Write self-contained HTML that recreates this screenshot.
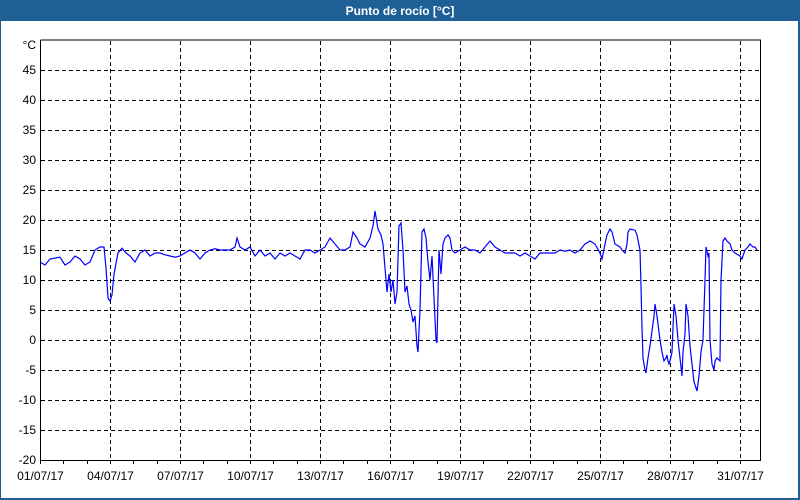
<!DOCTYPE html>
<html><head><meta charset="utf-8"><style>
html,body{margin:0;padding:0;width:800px;height:500px;overflow:hidden;background:#fff;font-family:"Liberation Sans",sans-serif}
</style></head><body>
<svg width="800" height="500" xmlns="http://www.w3.org/2000/svg" font-family="Liberation Sans, sans-serif">
<rect x="0" y="0" width="800" height="500" fill="#1e5f96"/>
<rect x="1" y="21" width="797" height="477" fill="#fff"/>
<text x="400" y="15" fill="#fff" font-size="12" font-weight="bold" text-anchor="middle">Punto de rocío [°C]</text>
<g id="grid" stroke="#000" stroke-dasharray="4,3" stroke-width="1"></g>
<g id="ticks" stroke="#000" stroke-width="1"></g>
<path d="M40.5 40 V460.5 H760.5 V40 H40.5" fill="none" stroke="#000" stroke-width="1"/>
<g id="ylab" font-size="12" text-anchor="end" fill="#000"></g>
<g id="xlab" font-size="12" text-anchor="middle" fill="#000"></g>
<text x="36" y="49" font-size="12" text-anchor="end">°C</text>
<polyline id="line" fill="none" stroke="#0000ff" stroke-width="1.2"/>
</svg>
<script>
var ns="http://www.w3.org/2000/svg";
function el(t,a,p,txt){var e=document.createElementNS(ns,t);for(var k in a)e.setAttribute(k,a[k]);if(txt)e.textContent=txt;document.getElementById(p).appendChild(e);}
for(var v=45;v>=-15;v-=5){var y=340-6*v+0.5;el('line',{x1:41,x2:760,y1:y,y2:y},'grid');}
for(var v=45;v>=-20;v-=5){el('text',{x:36,y:340-6*v+4},'ylab',String(v));}
var labs=["01/07/17","04/07/17","07/07/17","10/07/17","13/07/17","16/07/17","19/07/17","22/07/17","25/07/17","28/07/17","31/07/17"];
for(var i=0;i<11;i++){var x=40+70*i+0.5;if(i>0)el('line',{x1:x,x2:x,y1:41,y2:460},'grid');el('text',{x:x,y:480},'xlab',labs[i]);}
for(var d=0;d<31;d++){var x=Math.round(40+70*d/3)+0.5;el('line',{x1:x,x2:x,y1:460,y2:464},'ticks');}
var pts=[40,13,45,12.5,50,13.5,60,13.8,65,12.5,70,13,75,14,80,13.5,85,12.5,90,13,95,15,100,15.5,104,15.5,106,12,108,7,110,6.5,112,7.5,114,11,118,14.5,122,15.3,126,14.5,130,14,135,13,140,14.5,145,15,150,14,155,14.5,160,14.5,165,14.2,170,14,175,13.8,180,14,185,14.5,190,15,195,14.5,200,13.5,205,14.5,210,15,215,15.2,220,15,225,15,230,15,235,15.5,237,17,240,15.5,245,15,250,15.5,255,14,260,15,265,14,270,14.5,275,13.5,280,14.5,285,14,290,14.5,295,14,300,13.5,305,15,310,15,315,14.5,320,15,325,15.5,330,17,335,16,340,15,345,15,350,15.5,353,18,357,17,360,16,365,15.5,370,17,373,19,375,21.5,378,18.5,381,17.5,383,16,385,12,387,8,389,11,391,8,393,10,395,6,397,8,399,19,401,19.5,403,15,405,8,407,9,409,6,411,5,413,3,415,4,417,-1,418,-2,420,5,422,18,424,18.5,426,17,428,13,430,10,432,14,434,7,436,0,437,-0.5,439,15,441,11,443,16,445,17,448,17.5,450,17,452,15,455,14.5,460,15,465,15.5,470,15,475,15,480,14.5,485,15.5,490,16.5,495,15.5,500,15,505,14.5,510,14.5,515,14.5,520,14,525,14.5,530,14,535,13.5,540,14.5,545,14.5,550,14.5,555,14.5,560,15,565,14.8,570,15,575,14.5,580,15,585,16,590,16.5,595,16,600,14.5,602,13.5,605,16,607,17.5,610,18.5,612,18,615,16,620,15.5,622,15,625,14.5,627,16,628,18,630,18.5,635,18.3,637,17.5,640,15,641,9,642,2,643,-3,645,-5,646,-5.5,648,-3,650,-1,652,1.5,654,4,655,6,657,4,660,0,662,-2,664,-3.5,666,-3,667,-2.5,668,-3.5,669,-4,670,-3.5,672,-2,674,6,676,4,678,0,680,-3,682,-6,683,-2,685,1,686,6,688,4,690,-1,692,-4,694,-7,696,-8,697,-8.5,699,-6,701,-2,703,0,705,10,706,15.5,708,14,709,14.5,710,0,712,-4,713,-4.5,714,-5,715,-3.5,717,-3,720,-3.5,721,10,723,16.5,725,17,727,16.5,730,16,732,15,735,14.5,740,14,742,13.5,745,15,748,15.5,750,16,753,15.5,755,15.5,757,15];
var s=[];for(var i=0;i<pts.length;i+=2)s.push(pts[i]+","+(340-6*pts[i+1]));
document.getElementById('line').setAttribute('points',s.join(' '));
</script>
</body></html>
